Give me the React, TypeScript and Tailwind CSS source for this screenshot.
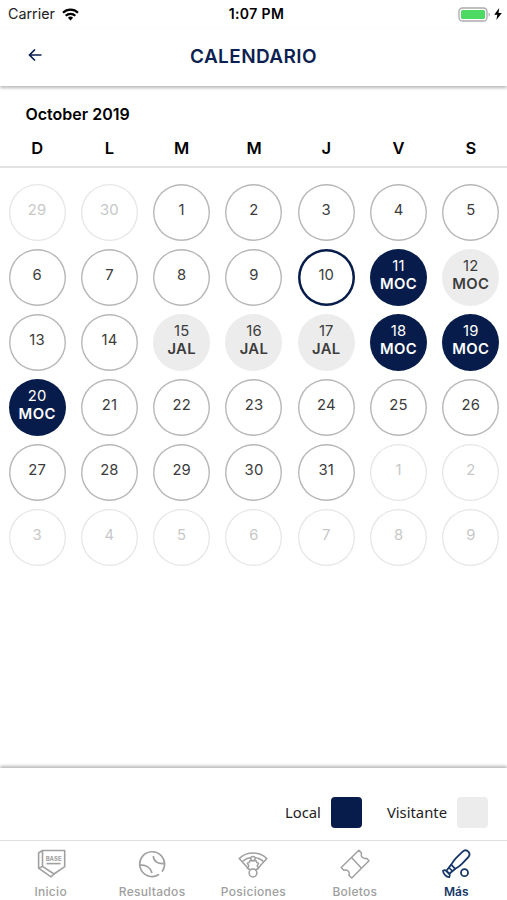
import { clsx } from 'clsx';
import type { ReactNode } from 'react';

type Kind = 'out' | 'day' | 'today' | 'home' | 'away';

interface Day {
  n: number;
  kind: Kind;
  rival?: string;
}

const weekdays = ['D', 'L', 'M', 'M', 'J', 'V', 'S'];

const games: Record<number, { kind: Kind; rival: string }> = {
  11: { kind: 'home', rival: 'MOC' },
  12: { kind: 'away', rival: 'MOC' },
  15: { kind: 'away', rival: 'JAL' },
  16: { kind: 'away', rival: 'JAL' },
  17: { kind: 'away', rival: 'JAL' },
  18: { kind: 'home', rival: 'MOC' },
  19: { kind: 'home', rival: 'MOC' },
  20: { kind: 'home', rival: 'MOC' },
};

const TODAY = 10;

const days: Day[] = [
  ...[29, 30].map((n): Day => ({ n, kind: 'out' })),
  ...Array.from({ length: 31 }, (_, i): Day => {
    const n = i + 1;
    return { n, kind: n === TODAY ? 'today' : 'day', ...games[n] };
  }),
  ...Array.from({ length: 9 }, (_, i): Day => ({ n: i + 1, kind: 'out' })),
];

const dayStyles: Record<Kind, string> = {
  out: 'shadow-[inset_0_0_0_1.3px_#e6e6e6] text-[#c8c8c8]',
  day: 'shadow-[inset_0_0_0_1.4px_#b8b8b8] text-[#3c3c3c]',
  today: 'shadow-[inset_0_0_0_2.5px_#071c4a] text-[#3c3c3c]',
  home: 'bg-[#071c4a] text-white',
  away: 'bg-[#ececec] text-[#3c3c3c]',
};

const DayCell = ({ day }: { day: Day }) => (
  <div className="flex h-[65.1px] justify-center">
    <div
      className={clsx(
        'flex h-[57px] w-[57px] flex-col items-center justify-center text-[14.8px] leading-[18px]',
        'rounded-full',
        dayStyles[day.kind],
        day.rival ? 'pb-[5px]' : 'pb-[4px]',
      )}
    >
      <span className="tracking-[0.2px]">{day.n}</span>
      {day.rival && <span className="font-semibold tracking-[0.4px]">{day.rival}</span>}
    </div>
  </div>
);

const StatusBar = () => (
  <div className="flex h-7 items-center justify-between pl-2 pr-[5px] text-black">
    <div className="flex w-[120px] items-center gap-[7px]">
      <span className="text-[14.3px] text-[#222]">Carrier</span>
      <svg width="17" height="13" viewBox="0 0 17 13" fill="none" stroke="currentColor" strokeWidth="2.2">
        <path d="M1 4.8a10.6 10.6 0 0 1 15 0" />
        <path d="M3.7 7.8a6.8 6.8 0 0 1 9.6 0" />
        <path d="M8.5 12.4 5.9 9.8a3.7 3.7 0 0 1 5.2 0z" fill="currentColor" stroke="none" />
      </svg>
    </div>
    <span className="pl-[3px] text-[14px] font-semibold leading-none tracking-[0.4px]">1:07 PM</span>
    <div className="flex w-[120px] items-center justify-end gap-[3px]">
      <svg width="33" height="15" viewBox="0 0 33 15">
        <rect x="1" y="1" width="28" height="13" rx="3.5" fill="#fff" stroke="#aaa" strokeWidth="1.3" />
        <rect x="3" y="3" width="24" height="9" rx="1.5" fill="#4cd964" />
        <path d="M30.6 5.4c1.6.6 1.6 3.6 0 4.2z" fill="#aaa" />
      </svg>
      <svg width="8" height="12" viewBox="0 0 8 12" fill="currentColor">
        <path d="M5.2 0 .2 6.8h3.1L2.4 12l5.4-7.1H4.5z" />
      </svg>
    </div>
  </div>
);

const HomePlateIcon = () => (
  <svg width="30" height="30" viewBox="0 0 30 30" fill="none" stroke="currentColor" strokeWidth="1.6" strokeLinejoin="round">
    <path d="M6.5 1.5h22.2v16.2L18 25 6.5 17.4z" />
    <path d="M6.5 1.5 2.6 4v15.2L15 27.8l3-2.8" />
    <path d="m2.8 19.2 3.7-1.8" />
    <text x="17.6" y="12" textAnchor="middle" fontSize="6" fontWeight="bold" fill="currentColor" stroke="none">
      BASE
    </text>
    <path d="M10.5 14.6h14" />
  </svg>
);

const BallIcon = () => (
  <svg width="28" height="28" viewBox="0 0 28 28" fill="none" stroke="currentColor" strokeWidth="1.7" strokeLinecap="round">
    <path d="M20.5 24.8A12.4 12.4 0 1 1 26.2 17Q25.6 19.5 24.4 21" />
    <path d="M2.6 15.2c5.6-.6 9.8 2.7 11.2 7.3" />
    <path d="M15.4 6.6c.4 4.7 4.5 7.6 10.7 7" />
  </svg>
);

const FieldIcon = () => (
  <svg width="30" height="28" viewBox="0 0 30 28" fill="none" stroke="currentColor" strokeWidth="1.5" strokeLinejoin="round">
    <path d="M11.8 20.2 1.2 8.6a20 20 0 0 1 27.6 0L18.2 20.2" />
    <path d="M4.3 11.8a15.6 15.6 0 0 1 21.4 0" />
    <path d="M11.8 10.8h6.4l.6 1.8 1.8.6-1.4 2.6 1.4 2.6-2.8 1.2h-5.6l-2.8-1.2 1.4-2.6-1.4-2.6 1.8-.6z" />
    <circle cx="15" cy="8.6" r="2.2" fill="#fff" />
    <circle cx="15" cy="23" r="3.9" fill="#fff" />
  </svg>
);

const TicketIcon = () => (
  <svg width="30" height="30" viewBox="0 0 30 30" fill="none" stroke="currentColor" strokeWidth="1.5" strokeLinejoin="round">
    <path d="M1.2 18.5 18.9 1.3l2.6 2.8c-1 3.4 1.5 6 5 5.1l2.5 2.6-17.2 17.2-2.8-2.6c1.1-3.7-1.6-6.3-5.2-5.2z" />
    <path d="m11.5 8.6 9.8 10.4" />
  </svg>
);

const BatIcon = () => (
  <svg width="30" height="30" viewBox="0 0 30 30" fill="none" stroke="currentColor" strokeWidth="1.8" strokeLinejoin="round">
    <path d="M10.2 15.6c1.4-2.5 3-4.8 5-6.8l6.2-6c1.9-1.7 4.4-1.7 5.9-.2s1.4 4-.3 5.9l-6.1 6.3c-2 2-4.2 3.6-6.6 5z" />
    <path d="m10.2 15.6-4.8 6.2 2.9 3 6-5" />
    <path d="M2 21.8c1.1-.8 2.4-.8 3.4 0l2.9 3c.8 1 .8 2.3 0 3.4-3-.2-6.1-3.2-6.3-6.4z" />
    <path d="m7.9 18.6 3.5 3.4" strokeWidth="1.5" />
    <circle cx="23.5" cy="23.7" r="3.5" />
  </svg>
);

const tabs: { label: string; icon: ReactNode; active?: boolean }[] = [
  { label: 'Inicio', icon: <HomePlateIcon /> },
  { label: 'Resultados', icon: <BallIcon /> },
  { label: 'Posiciones', icon: <FieldIcon /> },
  { label: 'Boletos', icon: <TicketIcon /> },
  { label: 'Más', icon: <BatIcon />, active: true },
];

export default function App() {
  return (
    <div className="flex h-[900px] w-[507px] flex-col overflow-hidden bg-white font-['Inter',sans-serif]">
      <StatusBar />

      <header className="grid h-[58px] shrink-0 grid-cols-[1fr_auto_1fr] items-center px-7 pb-[3px] text-[#0c1f52] shadow-[0_2px_3px_rgba(0,0,0,0.28)]">
        <svg width="14" height="13" viewBox="0 0 14 13" fill="none" stroke="currentColor" strokeWidth="1.7">
          <path d="M13.5 6H1.5M7 .5 1.5 6 7 11.5" />
        </svg>
        <h1 className="pt-[3px] text-[19px] font-semibold tracking-[0.4px]">CALENDARIO</h1>
      </header>

      <section className="flex h-[82px] shrink-0 flex-col border-b-2 border-[#e2e2e2] pl-px pt-[17px] text-black">
        <h2 className="pl-[24.5px] text-[16px] font-semibold leading-[22px]">October 2019</h2>
        <div className="mt-3 grid grid-cols-7 text-center text-[16.5px] font-semibold leading-[22px]">
          {weekdays.map((day, i) => (
            <span key={i}>{day}</span>
          ))}
        </div>
      </section>

      <main className="grid flex-1 grid-cols-7 content-start pl-px pt-[15.5px]">
        {days.map((day, i) => (
          <DayCell key={i} day={day} />
        ))}
      </main>

      <div className="flex h-[72px] shrink-0 items-center justify-end pr-[19px] pt-[17px] font-['Noto_Sans',sans-serif] text-[14.8px] text-[#222] shadow-[0_-2px_3px_rgba(0,0,0,0.28)]">
        <span>Local</span>
        <span className="ml-[10px] mr-[25px] h-[31px] w-[31px] rounded bg-[#071c4a]" />
        <span>Visitante</span>
        <span className="ml-[10px] h-[31px] w-[31px] rounded bg-[#ececec]" />
      </div>

      <nav className="grid h-[60px] shrink-0 grid-cols-5 border-t border-[#e0e0e0] text-[12px] font-medium">
        {tabs.map(({ label, icon, active }) => (
          <div
            key={label}
            className={clsx('flex flex-col items-center pt-2', active ? 'text-[#163768]' : 'text-[#a0a0a0]')}
          >
            <div className="flex h-[30px] items-center">{icon}</div>
            <span className={clsx('mt-[5px] leading-4', active ? 'font-semibold' : 'tracking-[0.3px]')}>{label}</span>
          </div>
        ))}
      </nav>
    </div>
  );
}
